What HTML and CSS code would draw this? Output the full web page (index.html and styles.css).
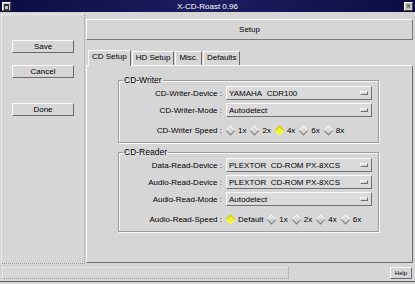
FILE: index.html
```html
<!DOCTYPE html>
<html lang="en">
<head>
  <meta charset="UTF-8" />
  <title>X-CD-Roast 0.96</title>
  <link rel="stylesheet" href="styles.css">
</head>
<body>
  <div class="window">
    <div class="titlebar">
      <span class="tb-icon"><span class="tb-icon-in"></span></span>
      <span class="tb-title">X-CD-Roast 0.96</span>
      <span class="tb-close">&times;</span>
    </div>

    <div class="main">
      <div class="side">
        <button class="btn">Save</button>
        <button class="btn btn-cancel">Cancel</button>
        <button class="btn btn-done">Done</button>
      </div>

      <div class="content">
        <div class="header">Setup</div>

        <div class="tabs">
          <span class="tab active">CD Setup</span>
          <span class="tab">HD Setup</span>
          <span class="tab">Misc.</span>
          <span class="tab">Defaults</span>
        </div>

        <div class="panel">
          <fieldset class="group">
            <legend>CD-Writer</legend>
            <div class="row">
              <label>CD-Writer-Device :</label>
              <div class="select">YAMAHA&nbsp; CDR100<span class="arrow"></span></div>
            </div>
            <div class="row">
              <label>CD-Writer-Mode :</label>
              <div class="select">Autodetect<span class="arrow"></span></div>
            </div>
            <div class="row speed">
              <label>CD-Writer Speed :</label>
              <div class="radios">
                <span class="radio"><i class="dia"></i>1x</span>
                <span class="radio"><i class="dia"></i>2x</span>
                <span class="radio"><i class="dia on"></i>4x</span>
                <span class="radio"><i class="dia"></i>6x</span>
                <span class="radio"><i class="dia"></i>8x</span>
              </div>
            </div>
          </fieldset>

          <fieldset class="group">
            <legend>CD-Reader</legend>
            <div class="row">
              <label>Data-Read-Device :</label>
              <div class="select">PLEXTOR&nbsp; CD-ROM PX-8XCS<span class="arrow"></span></div>
            </div>
            <div class="row">
              <label>Audio-Read-Device :</label>
              <div class="select">PLEXTOR&nbsp; CD-ROM PX-8XCS<span class="arrow"></span></div>
            </div>
            <div class="row">
              <label>Audio-Read-Mode :</label>
              <div class="select">Autodetect<span class="arrow"></span></div>
            </div>
            <div class="row speed">
              <label>Audio-Read-Speed :</label>
              <div class="radios">
                <span class="radio"><i class="dia on"></i>Default</span>
                <span class="radio"><i class="dia"></i>1x</span>
                <span class="radio"><i class="dia"></i>2x</span>
                <span class="radio"><i class="dia"></i>4x</span>
                <span class="radio"><i class="dia"></i>6x</span>
              </div>
            </div>
          </fieldset>
        </div>
      </div>
    </div>

    <div class="status">
      <div class="status-msg"></div>
      <button class="help">Help</button>
    </div>
  </div>
</body>
</html>
```

FILE: styles.css
```css
body {
  margin: 0;
  background: #d6d6d6;
  color: #000;
  font-family: "Liberation Sans", Arial, sans-serif;
  font-size: 8px;
}
.window {
  width: 415px;
  height: 284px;
  display: flex;
  flex-direction: column;
  overflow: hidden;
}

/* title bar */
.titlebar {
  height: 12px;
  flex: none;
  display: flex;
  align-items: center;
  padding: 0 2px;
  background: linear-gradient(to right, #0c0c42, #1e1e62 50%, #0c0c42);
  color: #fff;
}
.tb-title {
  flex: 1;
  text-align: center;
  font-size: 8px;
}
.tb-icon, .tb-close {
  width: 9px;
  height: 9px;
  box-sizing: border-box;
  background: #c4c4c4;
  border: 1px solid;
  border-color: #fff #444 #444 #fff;
}
.tb-icon-in {
  display: block;
  margin: 1px;
  height: 3px;
  border: 1px solid #333;
  border-top-width: 2px;
}
.tb-close {
  font-size: 9px;
  line-height: 7px;
  text-align: center;
  color: #333;
}

/* main area */
.main {
  flex: 1;
  display: flex;
  padding: 2px 2px 0 1px;
}
.side {
  flex: none;
  width: 84px;
  box-sizing: border-box;
  border: 1px dotted #f8f8f8;
  border-right-color: #999;
  border-bottom-color: #999;
  display: flex;
  flex-direction: column;
  align-items: center;
  padding-top: 25px;
}
.btn {
  width: 62px;
  height: 13px;
  padding: 0;
  background: #d6d6d6;
  border: 1px solid;
  border-color: #fafafa #6a6a6a #6a6a6a #fafafa;
  font: inherit;
  color: #000;
}
.btn-cancel {
  margin-top: 12px;
}
.btn-done {
  margin-top: 25px;
}

.content {
  flex: 1;
  min-width: 0;
  display: flex;
  flex-direction: column;
  margin-left: 1px;
  padding: 5px 0 1px;
}
.header {
  height: 21px;
  box-sizing: border-box;
  border: 1px solid;
  border-color: #fafafa #7a7a7a #7a7a7a #fafafa;
  text-align: center;
  line-height: 19px;
}

/* tabs */
.tabs {
  display: flex;
  align-items: flex-end;
  margin-top: 10px;
  padding-left: 2px;
}
.tab {
  height: 13px;
  line-height: 12px;
  padding: 0 3px;
  border: 1px solid;
  border-bottom: none;
  border-color: #fafafa #6a6a6a transparent #fafafa;
  margin-right: 1px;
}
.tab.active {
  height: 15px;
  margin-bottom: -1px;
  position: relative;
  background: #d6d6d6;
}
.panel {
  flex: 1;
  border: 1px solid;
  border-color: #fafafa #6a6a6a #6a6a6a #fafafa;
  padding: 0 33px 0 31px;
}

/* groups */
.group {
  min-width: 0;
  margin: 9px 0 0;
  padding: 1px 6px 5px 0;
  border: 1px solid #9c9c9c;
  box-shadow: 1px 1px 0 #fafafa, inset 1px 1px 0 #fafafa;
}
.group + .group {
  margin-top: 4px;
}
.group legend {
  margin-left: 4px;
  padding: 0 1px;
  font-size: 8.5px;
}
.row {
  display: grid;
  grid-template-columns: 103px 1fr;
  column-gap: 4px;
  align-items: center;
  height: 14px;
  margin-bottom: 3px;
}
.row label {
  text-align: right;
  white-space: nowrap;
}
.row.speed {
  margin: 6px 0 0;
}
.select {
  height: 14px;
  box-sizing: border-box;
  display: flex;
  align-items: center;
  justify-content: space-between;
  padding: 0 3px 0 2px;
  background: #dadada;
  border: 1px solid;
  border-color: #fafafa #707070 #707070 #fafafa;
  white-space: nowrap;
}
.arrow {
  width: 6px;
  height: 2px;
  border: 1px solid;
  border-color: #fafafa #707070 #707070 #fafafa;
}

/* radio diamonds */
.radios {
  display: flex;
  align-items: center;
  padding-left: 1px;
}
.radio {
  display: flex;
  align-items: center;
  margin-right: 5px;
}
.dia {
  width: 5px;
  height: 5px;
  transform: rotate(45deg);
  border: 1px solid;
  border-color: #fafafa #7a7a7a #7a7a7a #fafafa;
  margin-right: 4px;
}
.dia.on {
  background: #f0f030;
  border-color: #c8c800 #f8f860 #f8f860 #c8c800;
}

/* status bar */
.status {
  height: 17px;
  flex: none;
  display: flex;
  align-items: center;
  padding: 0 3px 0 2px;
  border-bottom: 1px solid #5a5a5a;
  margin-bottom: 2px;
}
.status-msg {
  width: 287px;
  height: 12px;
  box-sizing: border-box;
  border: 1px dotted #f8f8f8;
  border-right-color: #999;
  border-bottom-color: #999;
}
.help {
  margin-left: auto;
  width: 22px;
  height: 12px;
  padding: 0;
  background: #d6d6d6;
  border: 1px solid;
  border-color: #fafafa #6a6a6a #6a6a6a #fafafa;
  font: inherit;
  font-size: 6px;
  color: #000;
}
```
